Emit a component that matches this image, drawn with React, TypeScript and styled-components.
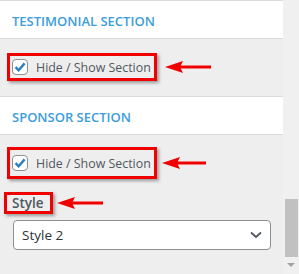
import styled, { createGlobalStyle } from 'styled-components';

const GlobalStyle = createGlobalStyle`
    body {
        margin: 0;
        background: #f0f0f0;
        font-family: "Open Sans", "Noto Sans", sans-serif;
    }
`

const Frame = styled.div`
    display: flex;
    width: 299px;
    height: 274px;
    overflow: hidden;
`

const Panel = styled.div`
    width: 283px;
    background: #eeeeee;
    display: flex;
    flex-direction: column;
`

const SectionHeader = styled.div`
    height: 35px;
    background: #ffffff;
    border-top: 1px solid #dcdcde;
    border-bottom: 1px solid #dcdcde;
    display: flex;
    align-items: center;
    padding-left: 12px;
    padding-top: 2px;
    color: #3b9ddd;
    font-size: 13px;
    font-weight: 600;
`

interface SectionBodyProps {
    top: number;
    bottom: number;
}

const SectionBody = styled.div<SectionBodyProps>`
    padding: ${p => p.top}px 0 ${p => p.bottom}px 7px;
    display: flex;
    flex-direction: column;
`

const Row = styled.div`
    display: flex;
    align-items: center;
`

interface MarkBoxProps {
    h: number;
}

const MarkBox = styled.div<MarkBoxProps>`
    height: ${p => p.h}px;
    box-sizing: border-box;
    border: 3px solid #f00000;
    box-shadow: 2px 2px 3px rgba(0, 0, 0, 0.35);
    display: flex;
    align-items: center;
    padding: 0 3px 0 2px;
    color: #50575e;
    font-size: 12.4px;
`

const CheckBox = styled.span`
    width: 16px;
    height: 16px;
    box-sizing: border-box;
    border: 1px solid #8c8f94;
    border-radius: 4px;
    background: #ffffff;
    margin-right: 8px;
    display: flex;
    align-items: center;
    justify-content: center;
`

const Label = styled.span`
    font-weight: 600;
    font-size: 13.5px;
    color: #50575e;
    padding: 0 3px 0 3px;
`

const Arrow = ({ width, gap }: { width: number; gap: number }) => (
    <svg width={width} height="12" viewBox={`0 0 ${width} 12`} style={{ marginLeft: gap }}>
        <polygon points="0,6 18,0 15,6 18,12" fill="#f00000" />
        <rect x="14" y="4.5" width={width - 14} height="3" fill="#f00000" />
    </svg>
)

const Check = () => (
    <svg width="14" height="14" viewBox="0 0 14 14">
        <path d="M2.5 7.2 L5.6 10.2 L11.6 3.4" stroke="#2a7dc0" strokeWidth="2.4" fill="none" />
    </svg>
)

const Select = styled.div`
    margin: 6px 12px 0 6px;
    height: 30px;
    box-sizing: border-box;
    background: #ffffff;
    border: 1px solid #8c8f94;
    border-radius: 4px;
    display: flex;
    align-items: center;
    justify-content: space-between;
    padding: 0 8px 0 8px;
    font-size: 13.5px;
    color: #2c3338;
`

const Scrollbar = styled.div`
    width: 16px;
    display: flex;
    flex-direction: column;
    align-items: center;
    padding-top: 199px;
`

const Thumb = styled.div`
    width: 13px;
    height: 58px;
    background: #c1c1c1;
`

const DownArrow = styled.div`
    margin-top: 6px;
    width: 0;
    height: 0;
    border-left: 4px solid transparent;
    border-right: 4px solid transparent;
    border-top: 4px solid #a3a3a3;
`

export default function App() {
    return (
        <Frame>
            <GlobalStyle />
            <Panel>
                <SectionHeader>TESTIMONIAL SECTION</SectionHeader>
                <SectionBody top={14} bottom={15}>
                    <Row>
                        <MarkBox h={28}>
                            <CheckBox><Check /></CheckBox>
                            Hide / Show Section
                        </MarkBox>
                        <Arrow width={46} gap={8} />
                    </Row>
                </SectionBody>
                <SectionHeader>SPONSOR SECTION</SectionHeader>
                <SectionBody top={12} bottom={0}>
                    <Row>
                        <MarkBox h={32}>
                            <CheckBox><Check /></CheckBox>
                            Hide / Show Section
                        </MarkBox>
                        <Arrow width={44} gap={5} />
                    </Row>
                    <Row style={{ marginLeft: -3, marginTop: 13 }}>
                        <MarkBox h={22}>
                            <Label>Style</Label>
                        </MarkBox>
                        <Arrow width={46} gap={4} />
                    </Row>
                    <Select>
                        Style 2
                        <svg width="12" height="8" viewBox="0 0 12 8">
                            <path d="M1 1.5 L6 6 L11 1.5" stroke="#50575e" strokeWidth="1.8" fill="none" />
                        </svg>
                    </Select>
                </SectionBody>
            </Panel>
            <Scrollbar>
                <Thumb />
                <DownArrow />
            </Scrollbar>
        </Frame>
    )
}
